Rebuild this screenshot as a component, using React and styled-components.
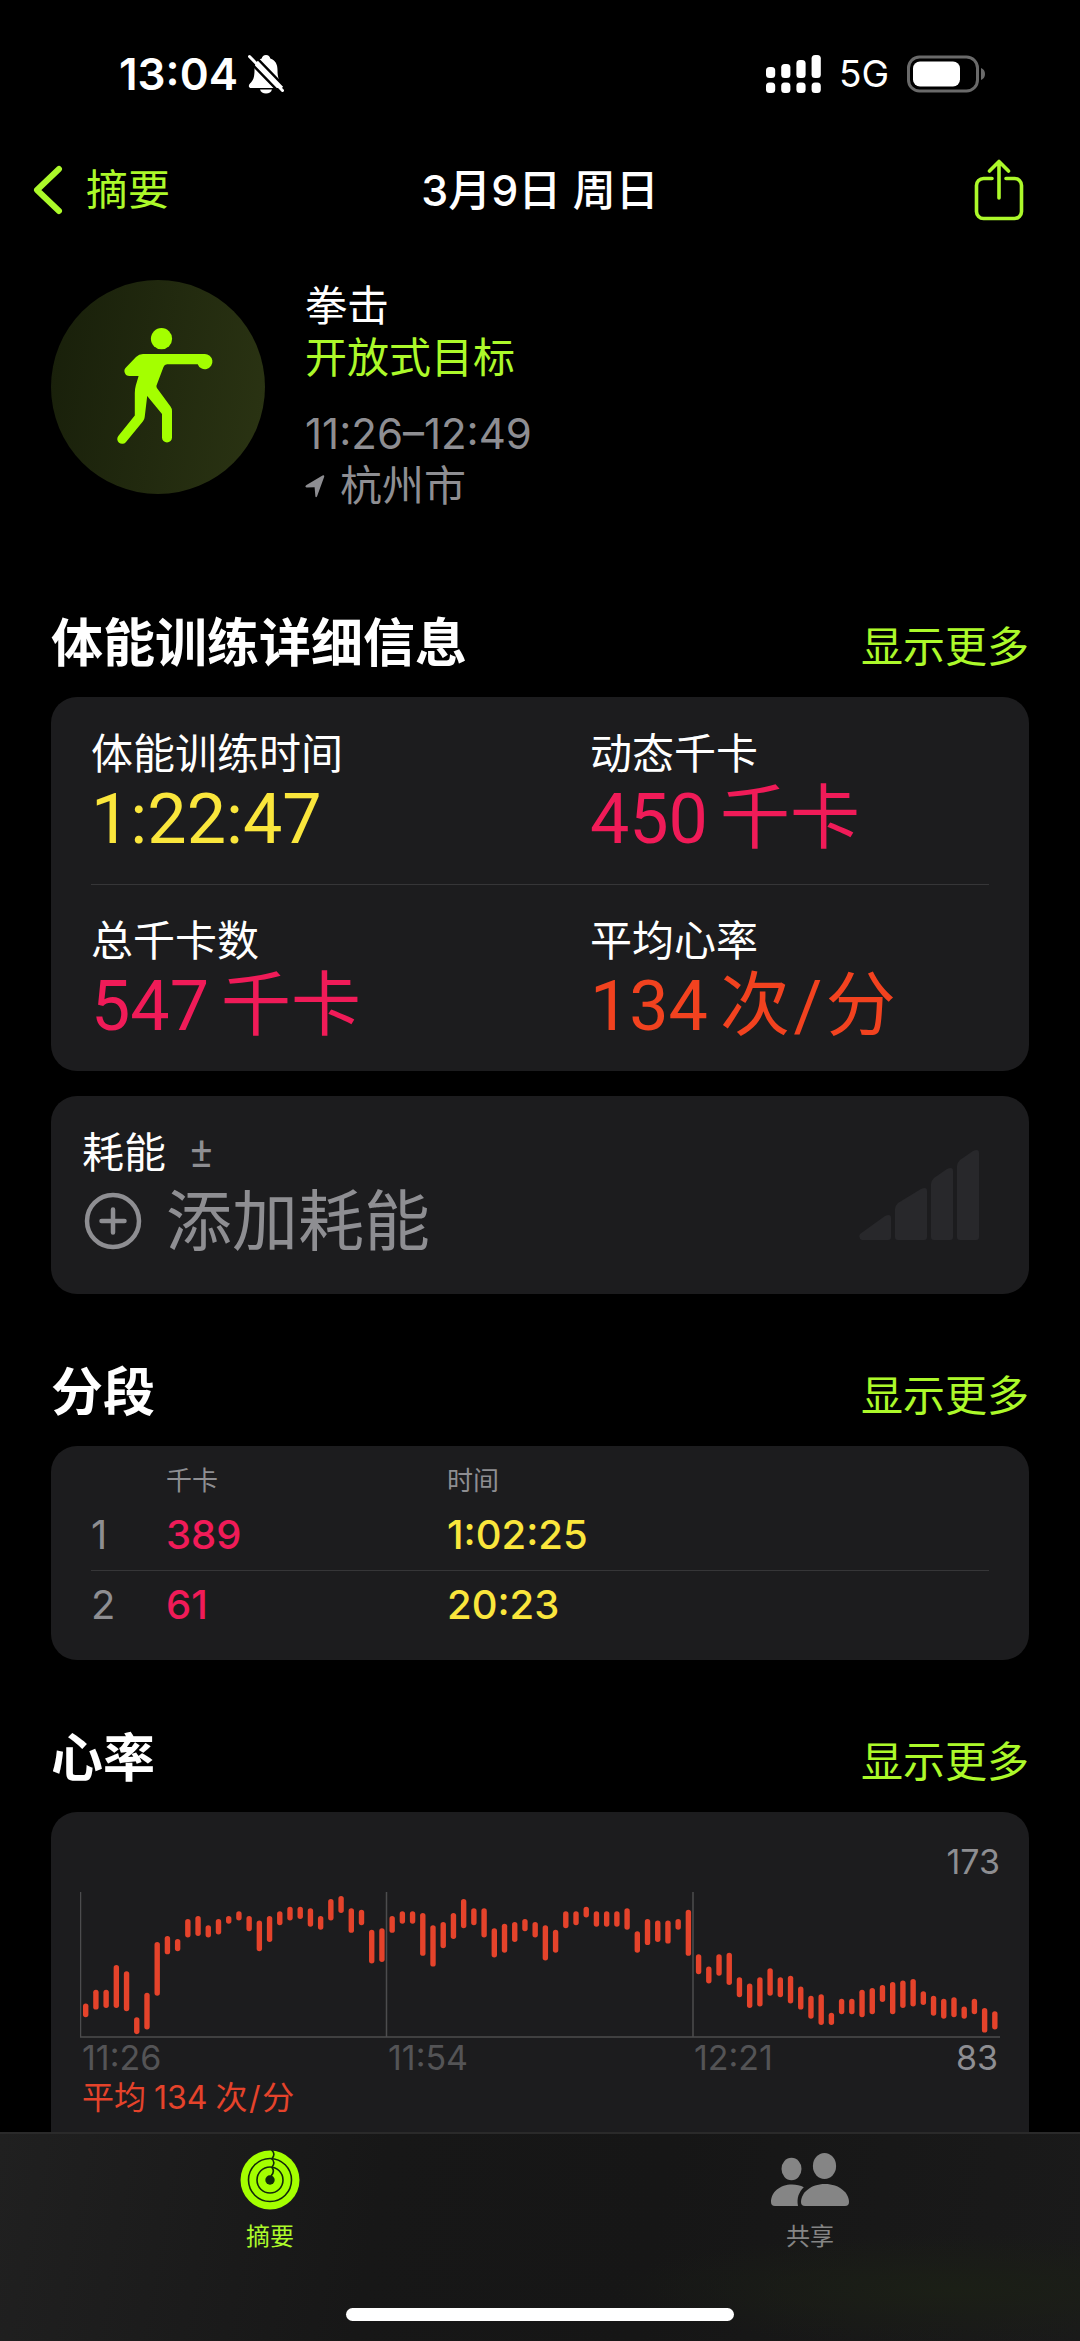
import React from 'react'
import styled, { ThemeProvider, createGlobalStyle } from 'styled-components'

const theme = {
  colors: {
    accent: '#acf92a',
    icon: '#a4ff00',
    card: '#1c1c1e',
    line: '#363638',
    muted: '#8e8e92',
    faint: '#545456',
    white: '#fff',
    yellow: '#fae63c',
    pink: '#f01b58',
    orange: '#f2421f',
    heart: '#e5432b'
  },
  fonts: {
    text: '"Inter", "Noto Sans CJK SC", sans-serif',
    number: '"Roboto", "Noto Sans CJK SC", sans-serif'
  }
}

const GlobalStyle = createGlobalStyle`
  * {
    box-sizing: border-box;
  }

  body {
    margin: 0;
    background: #000;
  }

  h1, h2, p, dl, dd {
    margin: 0;
  }
`

const Screen = styled.div`
  display: flex;
  flex-direction: column;
  height: 100vh;
  overflow: hidden;
  background: #000;
  color: #fff;
  font-family: ${props => props.theme.fonts.text};
  font-size: 42px;
  line-height: 52px;
`

const StatusBar = styled.div`
  display: flex;
  flex: none;
  justify-content: space-between;
  align-items: center;
  height: 148px;
  padding: 0 94px 0 119px;
`

const StatusGroup = styled.div`
  display: flex;
  align-items: center;
  gap: ${props => props.$gap}px;
`

const Clock = styled.span`
  font-size: 44px;
  font-weight: 600;
`

const Network = styled.span`
  font-size: 37px;
`

const NavBar = styled.header`
  display: grid;
  flex: none;
  grid-template-columns: 1fr auto 1fr;
  align-items: center;
  height: 84px;
  padding: 0 32px;
`

const BackLink = styled.a`
  display: flex;
  align-items: center;
  gap: 22px;
  color: ${props => props.theme.colors.accent};
  text-decoration: none;
`

const Title = styled.h1`
  font-size: 43px;
  font-weight: 500;
`

const IconButton = styled.button`
  display: flex;
  justify-self: end;
  padding: 0 24px;
  border: 0;
  background: none;
  color: ${props => props.theme.colors.accent};
`

const Content = styled.main`
  flex: 1;
  min-height: 0;
  overflow: hidden;
  padding: 48px 51px 0;
`

const Summary = styled.section`
  display: flex;
  gap: 40px;
  padding-bottom: 33px;
`

const Badge = styled.div`
  width: 214px;
  height: 214px;
  border-radius: 50%;
  background: linear-gradient(100deg, #181f0a, #2b3413);
`

const SummaryText = styled.div`
  display: flex;
  flex-direction: column;
`

const SummaryLine = styled.p`
  display: flex;
  align-items: center;
  gap: 15px;
  margin-top: ${props => (props.$spaced ? 24 : 0)}px;
  color: ${props => props.theme.colors[props.$tone]};
`

const SectionHeader = styled.div`
  display: flex;
  justify-content: space-between;
  align-items: baseline;
  padding: 69px 0 23px;
`

const SectionTitle = styled.h2`
  font-size: 52px;
  font-weight: 700;
  line-height: 60px;
`

const MoreLink = styled.a`
  color: ${props => props.theme.colors.accent};
  text-decoration: none;
`

const Card = styled.div`
  margin-bottom: ${props => props.$gap || 0}px;
  padding: ${props => props.$inset};
  border-radius: 26px;
  background: ${props => props.theme.colors.card};
`

const Metrics = styled.dl`
  display: grid;
  grid-template-columns: 5fr 4fr;
`

const Metric = styled.div`
  height: 187px;
  padding-top: 30px;
  border-top: 1px solid ${props => (props.$lined ? props.theme.colors.line : 'transparent')};
`

const MetricLabel = styled.dt`
  line-height: 52px;
`

const MetricValue = styled.dd`
  display: flex;
  gap: 12px;
  color: ${props => props.theme.colors[props.$tone]};
  font-family: ${props => props.theme.fonts.number};
  font-size: 70px;
  line-height: 78px;
`

const Slash = styled.span`
  margin: 0 0.05em;
`

const EffortCard = styled(Card)`
  display: flex;
  justify-content: space-between;
  align-items: center;
`

const EffortLabel = styled.p`
  display: flex;
  gap: 24px;
`

const PlusMinus = styled.span`
  color: ${props => props.theme.colors.muted};
  font-family: ${props => props.theme.fonts.number};
`

const AddButton = styled.button`
  display: flex;
  align-items: center;
  gap: 22px;
  padding: 0;
  border: 0;
  background: none;
  color: ${props => props.theme.colors.muted};
  font-family: inherit;
  font-size: 66px;
  line-height: 84px;
`

const SplitTable = styled.table`
  width: 100%;
  border-collapse: collapse;
  text-align: left;

  th, td {
    padding: 0;
  }

  thead th {
    height: 38px;
    color: ${props => props.theme.colors.muted};
    font-size: 26px;
    font-weight: 400;
    line-height: 38px;
  }

  tbody tr + tr {
    border-top: 1px solid ${props => props.theme.colors.line};
  }
`

const SplitCell = styled.td`
  width: ${props => props.$width};
  height: 70px;
  color: ${props => props.theme.colors[props.$tone]};
  font-size: 40px;
  font-weight: ${props => (props.$tone === 'muted' ? 400 : 500)};
`

const Limit = styled.p`
  color: ${props => props.theme.colors.muted};
  font-size: 34px;
  line-height: 40px;
  text-align: right;
`

const Chart = styled.svg`
  display: block;
  width: 100%;
  height: auto;
  margin-top: 10px;
`

const Axis = styled.div`
  display: grid;
  grid-template-columns: 1fr 1fr 1fr;
  position: relative;
  padding-left: 2px;
  color: ${props => props.theme.colors.faint};
  font-size: 34px;
  line-height: 40px;
`

const AxisEnd = styled(Limit)`
  position: absolute;
  top: 0;
  right: 2px;
`

const Average = styled.p`
  display: flex;
  gap: 8px;
  padding-left: 2px;
  color: ${props => props.theme.colors.heart};
  font-size: 32px;
  line-height: 40px;
`

const TabBar = styled.nav`
  display: flex;
  flex: none;
  flex-wrap: wrap;
  justify-content: center;
  align-content: flex-start;
  height: 209px;
  border-top: 2px solid #2a2a2a;
  background:
    radial-gradient(ellipse at 88% 75%, #1b1f16, transparent 25%),
    linear-gradient(100deg, #202020, #171717 35%, #161616 60%, #1a1a1a);
`

const Tab = styled.a`
  display: flex;
  flex: 1 0 50%;
  flex-direction: column;
  align-items: center;
  gap: 12px;
  height: 174px;
  padding-top: 16px;
  color: ${props => (props.$active ? props.theme.colors.accent : '#858585')};
  font-size: 24px;
  line-height: 30px;
  text-decoration: none;
`

const HomeIndicator = styled.div`
  width: 36%;
  height: 13px;
  border-radius: 7px;
  background: #fff;
`

const BellOff = () => (
  <svg width="36" height="40" viewBox="0 0 36 40" aria-hidden="true">
    <path
      d="M18 1c-2.400 0-4 1.500-4.300 3.600C8.500 6.500 6.500 10.500 6.500 16c0 8-1.500 10.500-4.500 13.500-2.200 2.200-1.200 4.500 1.500 4.500h29c2.700 0 3.700-2.300 1.500-4.500-3-3-4.500-5.500-4.500-13.500 0-5.500-2-9.500-7.200-11.400C22 2.500 20.400 1 18 1z"
      fill="#fff"
    />
    <path d="M12 35.500h12c-.6 2.500-3 4-6 4s-5.400-1.500-6-4z" fill="#fff" />
    <path d="M-1 5L33 40M4-1L38 34" stroke="#000" strokeWidth="2.500" />
    <path d="M1.500 2.500L34.500 36.500" stroke="#fff" strokeWidth="3" strokeLinecap="round" />
  </svg>
)

const signal = [12, 9, 5, 0]

const Signal = () => (
  <svg width="55" height="38" viewBox="0 0 55 38" aria-hidden="true" fill="#fff">
    {signal.map((top, i) => (
      <g key={top}>
        <rect x={i * 15.2} y={top} width="9.200" height={23 - top} rx="3.500" />
        <rect x={i * 15.2} y="27.500" width="9.200" height="10.500" rx="3.500" />
      </g>
    ))}
  </svg>
)

const Battery = () => (
  <svg width="79" height="38" viewBox="0 0 79 38" aria-hidden="true">
    <rect x="1.500" y="2" width="69" height="34" rx="11" fill="none" stroke="#6a6a6a" strokeWidth="3" />
    <rect x="6" y="6.500" width="47" height="25" rx="7" fill="#fff" />
    <path d="M74 13c2.600 1 4 3.300 4 6s-1.400 5-4 6z" fill="#6a6a6a" />
  </svg>
)

const Chevron = () => (
  <svg width="32" height="50" viewBox="0 0 32 50" aria-hidden="true">
    <path
      d="M27 4L5 25l22 21"
      fill="none"
      stroke="currentColor"
      strokeWidth="6"
      strokeLinecap="round"
      strokeLinejoin="round"
    />
  </svg>
)

const Share = () => (
  <svg width="50" height="62" viewBox="0 0 50 62" aria-hidden="true">
    <path
      d="M18 19.500H9.500a7 7 0 0 0-7 7v26a7 7 0 0 0 7 7h31a7 7 0 0 0 7-7v-26a7 7 0 0 0-7-7H32M25 39V3M15.500 12L25 2.500l9.500 9.500"
      fill="none"
      stroke="currentColor"
      strokeWidth="3.600"
      strokeLinecap="round"
      strokeLinejoin="round"
    />
  </svg>
)

const Boxer = () => (
  <svg width="214" height="214" viewBox="0 0 214 214" aria-hidden="true" fill={theme.colors.icon}>
    <circle cx="110.500" cy="58.700" r="10.600" />
    <path d="M92 74H153.500a7.600 7.600 0 1 1-6.800 10.200H116.500Q113.500 84 112.500 87L105.500 105.500a4 4 0 0 0 .4 2.600L119.500 126.500Q121 128.500 121 131V157.500a5 5 0 0 1-10 0V134L96.200 116 93.700 137Q93.500 139.500 92 141.200L74.800 162.200a4.900 4.900 0 0 1-7.500-6.300L83.800 135.500V113Q83.800 109 84.800 105.500L87.600 96H78.500a5 5 0 0 1-3.300-8.800L85 77Q88 74 92 74z" />
  </svg>
)

const LocationArrow = () => (
  <svg width="20" height="24" viewBox="0 0 20 24" aria-hidden="true">
    <path
      d="M1.500 11L17.500 1.500q2-.8 1.700 1.200L12 22.500q-1.100 1.600-1.600 0L9.600 13.300 1.500 13.500q-2.200-.8 0-2.500z"
      fill={theme.colors.muted}
    />
  </svg>
)

const PlusCircle = () => (
  <svg width="62" height="62" viewBox="0 0 62 62" aria-hidden="true">
    <circle cx="31" cy="31" r="26" fill="none" stroke="currentColor" strokeWidth="4.500" />
    <path d="M31 19.500v23M19.500 31h23" stroke="currentColor" strokeWidth="4.500" strokeLinecap="round" />
  </svg>
)

const EffortBars = () => (
  <svg width="120" height="94" viewBox="0 0 120 94" aria-hidden="true" fill="#28282b">
    <path d="M1 86L26 68q6-3 6 2v19q0 3-3 3H3q-4-2-2-6z" />
    <path d="M36 61q0-3 3-6L62 41q6-3 6 2v46q0 3-3 3H39q-3 0-3-3z" />
    <path d="M72 36q0-3 3-6l13-9q6-3 6 2v66q0 3-3 3H75q-3 0-3-3z" />
    <path d="M98 18q0-3 3-6l13-9q6-3 6 2v84q0 3-3 3h-16q-3 0-3-3z" />
  </svg>
)

const Rings = () => (
  <svg width="60" height="60" viewBox="0 0 60 60" aria-hidden="true">
    <circle cx="30" cy="30" r="29.500" fill={theme.colors.icon} />
    <g fill="none" stroke="#11290a" strokeWidth="1.600">
      <circle cx="30" cy="30" r="21.500" />
      <circle cx="30" cy="30" r="13" />
      <path d="M31.500 0q4.500 4 .5 8.500M31.500 8.500q4.500 4 .5 8.500M31.500 17q4 4-.5 9" />
    </g>
    <circle cx="30" cy="30" r="4.700" fill="#11290a" />
  </svg>
)

const People = () => (
  <svg width="78" height="60" viewBox="0 0 78 60" aria-hidden="true" fill="#858585">
    <ellipse cx="20.500" cy="19" rx="10" ry="11.200" />
    <ellipse cx="53.500" cy="16" rx="11.600" ry="13" />
    <path d="M27 56H4q-4 0-4-4C0 42 9 34.500 21 34.500c4.500 0 8.500 1 11.800 2.800C28 42 25.500 48 27 56z" />
    <path d="M34 56q-4 0-4-4c0-9 9.500-18 24-18s24 9 24 18q0 4-4 4z" />
  </svg>
)

// [low, high] bpm for each slice of the workout
const heartRates = [
  [94, 103], [99, 112], [100, 112], [100, 128], [98, 124], [83, 94], [86, 110], [108, 143], [135, 147], [137, 145],
  [146, 158], [147, 160], [146, 154], [148, 158], [155, 160], [157, 163], [150, 160], [137, 157], [143, 160], [154, 163],
  [157, 166], [158, 166], [153, 165], [151, 160], [157, 171], [162, 173], [149, 165], [154, 164], [129, 151], [130, 152],
  [149, 160], [155, 163], [155, 163], [134, 162], [127, 154], [139, 156], [145, 162], [152, 171], [154, 165], [146, 165],
  [133, 152], [136, 155], [143, 156], [150, 158], [146, 156], [131, 154], [136, 151], [152, 163], [154, 163], [159, 166],
  [153, 163], [153, 163], [153, 163], [151, 165], [136, 150], [141, 158], [143, 157], [142, 157], [151, 158], [134, 164],
  [122, 135], [116, 127], [121, 135], [115, 136], [107, 120], [100, 116], [101, 120], [108, 126], [107, 120], [103, 121],
  [99, 114], [93, 108], [89, 109], [89, 97], [96, 106], [96, 106], [94, 112], [96, 113], [104, 115], [96, 117],
  [100, 118], [101, 119], [102, 111], [95, 108], [93, 106], [94, 107], [93, 101], [96, 106], [84, 100], [86, 98]
]

const toY = bpm => 4 + (173 - bpm) * 1.535

const HeartChart = () => (
  <Chart viewBox="0 0 920 146" role="img" aria-label="心率">
    <path d="M.5 0V145M306.500 0V145M613 0V145M0 145H920" stroke="#4c4c4e" strokeWidth="1.500" />
    {heartRates.map(([low, high], i) => (
      <rect
        key={i}
        x={3 + i * 10.215}
        y={toY(high)}
        width="5.400"
        height={toY(low) - toY(high)}
        rx="2.700"
        fill={theme.colors.heart}
      />
    ))}
  </Chart>
)

const metrics = [
  { label: '体能训练时间', value: '1:22:47', tone: 'yellow' },
  { label: '动态千卡', value: '450', unit: '千卡', tone: 'pink' },
  { label: '总千卡数', value: '547', unit: '千卡', tone: 'pink' },
  { label: '平均心率', value: '134', unit: <>次<Slash>/</Slash>分</>, tone: 'orange' }
]

const splits = [
  { kcal: '389', time: '1:02:25' },
  { kcal: '61', time: '20:23' }
]

const Heading = ({ children }) => (
  <SectionHeader>
    <SectionTitle>{children}</SectionTitle>
    <MoreLink href="#more">显示更多</MoreLink>
  </SectionHeader>
)

const App = () => (
  <ThemeProvider theme={theme}>
    <GlobalStyle />
    <Screen>
      <StatusBar>
        <StatusGroup $gap={10}>
          <Clock>13:04</Clock>
          <BellOff />
        </StatusGroup>
        <StatusGroup $gap={18}>
          <Signal />
          <Network>5G</Network>
          <Battery />
        </StatusGroup>
      </StatusBar>

      <NavBar>
        <BackLink href="#summary">
          <Chevron />
          摘要
        </BackLink>
        <Title>3月9日 周日</Title>
        <IconButton type="button" aria-label="共享">
          <Share />
        </IconButton>
      </NavBar>

      <Content>
        <Summary>
          <Badge>
            <Boxer />
          </Badge>
          <SummaryText>
            <SummaryLine $tone="white">拳击</SummaryLine>
            <SummaryLine $tone="accent">开放式目标</SummaryLine>
            <SummaryLine $tone="muted" $spaced>11:26–12:49</SummaryLine>
            <SummaryLine $tone="muted">
              <LocationArrow />
              杭州市
            </SummaryLine>
          </SummaryText>
        </Summary>

        <Heading>体能训练详细信息</Heading>
        <Card $gap={25} $inset="0 40px">
          <Metrics>
            {metrics.map(({ label, value, unit, tone }, i) => (
              <Metric key={label} $lined={i > 1}>
                <MetricLabel>{label}</MetricLabel>
                <MetricValue $tone={tone}>
                  {value}
                  {unit && <span>{unit}</span>}
                </MetricValue>
              </Metric>
            ))}
          </Metrics>
        </Card>

        <EffortCard $inset="31px 50px 31px 31px">
          <div>
            <EffortLabel>
              耗能 <PlusMinus>±</PlusMinus>
            </EffortLabel>
            <AddButton type="button">
              <PlusCircle />
              添加耗能
            </AddButton>
          </div>
          <EffortBars />
        </EffortCard>

        <Heading>分段</Heading>
        <Card $inset="16px 40px 20px">
          <SplitTable>
            <thead>
              <tr>
                <th aria-label="#" />
                <th>千卡</th>
                <th>时间</th>
              </tr>
            </thead>
            <tbody>
              {splits.map(({ kcal, time }, i) => (
                <tr key={kcal}>
                  <SplitCell $width="75px" $tone="muted">{i + 1}</SplitCell>
                  <SplitCell $width="281px" $tone="pink">{kcal}</SplitCell>
                  <SplitCell $tone="yellow">{time}</SplitCell>
                </tr>
              ))}
            </tbody>
          </SplitTable>
        </Card>

        <Heading>心率</Heading>
        <Card $inset="30px 29px 60px">
          <Limit>173</Limit>
          <HeartChart />
          <Axis>
            <span>11:26</span>
            <span>11:54</span>
            <span>12:21</span>
            <AxisEnd>83</AxisEnd>
          </Axis>
          <Average>
            <span>平均</span>
            <span>134</span>
            <span>次<Slash>/</Slash>分</span>
          </Average>
        </Card>
      </Content>

      <TabBar>
        <Tab href="#summary" $active>
          <Rings />
          摘要
        </Tab>
        <Tab href="#sharing">
          <People />
          共享
        </Tab>
        <HomeIndicator />
      </TabBar>
    </Screen>
  </ThemeProvider>
)

export default App
